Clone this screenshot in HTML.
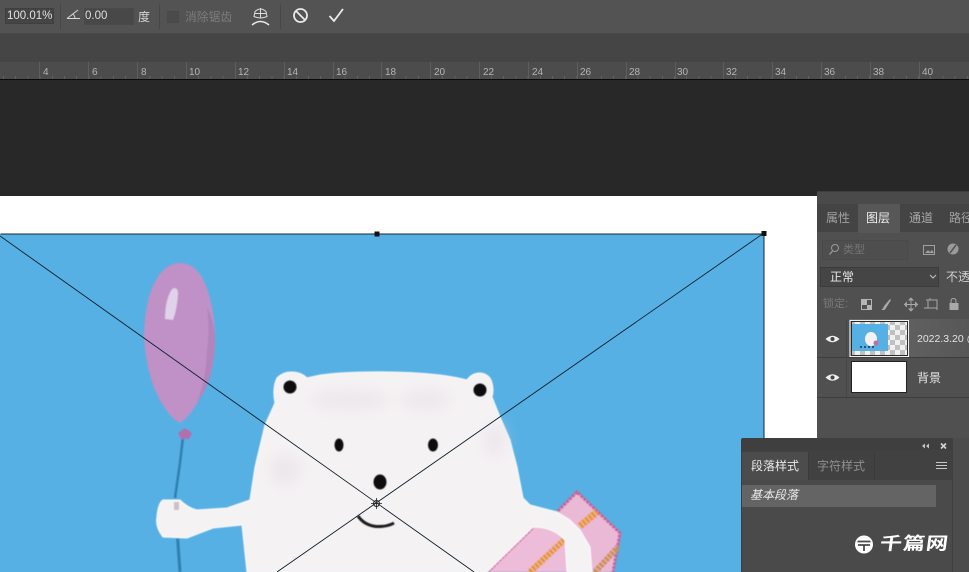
<!DOCTYPE html>
<html><head><meta charset="utf-8"><style>
html,body{margin:0;padding:0;background:#4c4c4c}
body{width:969px;height:572px;overflow:hidden;position:relative;font-family:"Liberation Sans","Noto Sans CJK SC",sans-serif}
#w{position:absolute;left:0;top:0;width:969px;height:572px;background:#282828;filter:blur(.3px);overflow:hidden}
#w div{position:absolute;white-space:nowrap}
svg{position:absolute;left:0;top:0}
#w .r{font-size:10px;top:67px;color:#b4b4b4;line-height:12px}
#w .m{width:1px;height:17px;top:62px;background:#5e5e5e}
#w .tab{font-size:12px;line-height:16px}
</style></head><body><div id="w">
<div style="left:0;top:0;width:969px;height:33px;background:#535353"></div>
<div style="left:0;top:33px;width:969px;height:29px;background:#454545;border-top:1px solid #4a4a4a;box-sizing:border-box"></div>
<div style="left:0;top:62px;width:969px;height:17px;background:#4c4c4c"></div>
<div style="left:0;top:76px;width:969px;height:3px;background:repeating-linear-gradient(90deg,#7a7a7a 0 1px,transparent 1px 12.2px);background-position:3px 0;opacity:.45"></div>
<div style="left:0;top:79px;width:969px;height:1px;background:#0a0a0a"></div>

<div style="left:5px;top:8px;width:49px;height:16px;background:#454545;border:1px solid #3f3f3f;box-sizing:border-box"></div>
<div style="left:7px;top:9px;font-size:11.5px;line-height:15px;color:#e2e2e2">100.01%</div>
<div style="left:60px;top:4px;width:1px;height:25px;background:#474747"></div>
<div style="left:84px;top:8px;width:50px;height:17px;background:#484848;border:1px solid #4a4a4a;box-sizing:border-box"></div>
<div style="left:85px;top:9px;font-size:11.5px;line-height:15px;color:#dedede">0.00</div>
<div style="left:138px;top:9px;font-size:12px;line-height:16px;color:#d6d6d6">度</div>
<div style="left:159px;top:4px;width:1px;height:25px;background:#474747"></div>
<div style="left:167px;top:11px;width:12px;height:12px;background:#4b4b4b;border:1px solid #494949;box-sizing:border-box"></div>
<div style="left:185px;top:9px;font-size:11.8px;line-height:16px;color:#7c7c7c">消除锯齿</div>
<div style="left:280px;top:4px;width:1px;height:25px;background:#474747"></div>

<svg width="969" height="572" viewBox="0 0 969 572" fill="none">
<path d="M67 18.500H80M67 18.500L78 10M75 18.500q0-3-2.500-4.500" stroke="#d8d8d8" stroke-width="1"/>
<path d="M255 11.500q5.500-5 11 0l1 5q-6.500 3-13 0zM254.500 13.500h12M260.500 8v10" stroke="#dcdcdc" stroke-width="1"/>
<path d="M252 25q8.500-7 17 0" stroke="#e6e6e6" stroke-width="1.500"/>
<circle cx="300.500" cy="15.500" r="6.500" stroke="#e8e8e8" stroke-width="1.800"/>
<path d="M296 11l9 9" stroke="#e8e8e8" stroke-width="1.800"/>
<path d="M329.500 16l4.500 5 9-12" stroke="#ececec" stroke-width="1.800"/>
</svg>

<div class="m" style="left:39px"></div><div class="r" style="left:43px">4</div>
<div class="m" style="left:88px"></div><div class="r" style="left:92px">6</div>
<div class="m" style="left:137px"></div><div class="r" style="left:141px">8</div>
<div class="m" style="left:186px"></div><div class="r" style="left:189px">10</div>
<div class="m" style="left:235px"></div><div class="r" style="left:238px">12</div>
<div class="m" style="left:284px"></div><div class="r" style="left:287px">14</div>
<div class="m" style="left:333px"></div><div class="r" style="left:336px">16</div>
<div class="m" style="left:381px"></div><div class="r" style="left:385px">18</div>
<div class="m" style="left:430px"></div><div class="r" style="left:434px">20</div>
<div class="m" style="left:479px"></div><div class="r" style="left:483px">22</div>
<div class="m" style="left:528px"></div><div class="r" style="left:532px">24</div>
<div class="m" style="left:577px"></div><div class="r" style="left:580px">26</div>
<div class="m" style="left:626px"></div><div class="r" style="left:629px">28</div>
<div class="m" style="left:675px"></div><div class="r" style="left:677px">30</div>
<div class="m" style="left:723px"></div><div class="r" style="left:726px">32</div>
<div class="m" style="left:772px"></div><div class="r" style="left:775px">34</div>
<div class="m" style="left:821px"></div><div class="r" style="left:824px">36</div>
<div class="m" style="left:870px"></div><div class="r" style="left:873px">38</div>
<div class="m" style="left:919px"></div><div class="r" style="left:922px">40</div>

<div style="left:0;top:196px;width:830px;height:376px;background:#fff"></div>
<svg width="969" height="572" viewBox="0 0 969 572" fill="none">
<defs>
<filter id="b" x="-5%" y="-5%" width="110%" height="110%"><feGaussianBlur stdDeviation=".6"/></filter>
<filter id="s" x="-30%" y="-30%" width="160%" height="160%"><feGaussianBlur stdDeviation="7"/></filter>
</defs>
<rect x="0" y="234" width="764" height="338" fill="#57b0e3"/>
<g filter="url(#b)">
<path d="M183 437L180 463L175 498" stroke="#2f7fb0" stroke-width="2.500"/>
<path d="M177 530L180 572" stroke="#2f7fb0" stroke-width="3"/>
<path d="M180 263Q200 263 209 295Q216 320 215 345Q212 380 196 405Q188 418 180 423Q170 418 160 400Q146 375 144 335Q145 300 155 282Q165 263 180 263Z" fill="#c091c6"/>
<path d="M207 307Q216 325 215 345Q213 370 208 383Q204 394 197 402Q206 380 207 350Q210 330 207 307Z" fill="#b384bc"/>
<path d="M172 289Q178 286 178 294Q177 310 173 320L165 319Q165 300 172 289Z" fill="#e0d2e8"/>
<path d="M178 433l7-5 7 5-3 6-8 0z" fill="#b170ad"/>
<path d="M558 511L577 492L620 533L613 572L585 572Z" fill="#eab9d5"/>
<path d="M558 511L577 492L620 533L613 572" stroke="#cf5e96" stroke-width="3" stroke-dasharray="3 1"/>
<path d="M580 526L597 512" stroke="#e9991f" stroke-width="7" stroke-dasharray="3 1"/>
<path d="M595 572L618 547" stroke="#cf9150" stroke-width="6" stroke-dasharray="3 1"/>
<path d="M487 572L533 527Q553 527 565 540L568 572Z" fill="#ecbcd8"/>
<path d="M487 572L533 527" stroke="#d4588f" stroke-width="3.500" stroke-dasharray="3 1"/>
<path d="M530 572L564 540" stroke="#e8981f" stroke-width="6" stroke-dasharray="3 1"/>
<path d="M277 378Q283 372 291 372Q301 372 307 378Q322 374 340 373Q395 370 440 375Q455 377 467 380Q472 373 480 373Q490 374 492 383Q494 390 492 397L500 417L510 440L517 467L523 498L530 505L557 512L570 520L580 530L590 547L592 572L567 572L565 540Q553 527 533 527L487 572L247 572L242 525L213 528L187 538L163 537Q155 527 157 517Q158 503 163 500L180 500Q188 508 197 510L227 508L250 500L255 467L265 425L275 403Q272 388 277 378Z" fill="#f5f2f4" stroke="#fbfbfc" stroke-width="1"/>
<rect x="174" y="502" width="5" height="8" fill="#cdbfc2"/>
</g>
<g filter="url(#s)" fill="#e5dfe4" opacity=".55">
<ellipse cx="285" cy="470" rx="16" ry="16"/>
<ellipse cx="350" cy="400" rx="40" ry="10"/>
<ellipse cx="425" cy="400" rx="25" ry="10"/>
<ellipse cx="495" cy="440" rx="10" ry="18"/>
</g>
<g filter="url(#b)">
<ellipse cx="290" cy="387" rx="6.500" ry="6.500" fill="#0c0c0c"/>
<ellipse cx="480" cy="390" rx="6.500" ry="6.500" fill="#0c0c0c"/>
<ellipse cx="339" cy="445" rx="4.500" ry="6.500" fill="#111"/>
<ellipse cx="433" cy="445" rx="5" ry="6.500" fill="#111"/>
<ellipse cx="380" cy="482" rx="6.500" ry="7.500" fill="#0c0c0c"/>
<path d="M358 516Q364 525 376 526.500Q387 527 394 523" stroke="#1f1f1f" stroke-width="3"/>
</g>
<path d="M0.500 234H764V572" stroke="#1a2630" stroke-width="1"/>
<path d="M0 236L474 572M764 233L277 572" stroke="#10202c" stroke-width=".9"/>
<circle cx="376.500" cy="503.500" r="3" stroke="#222" stroke-width="1"/>
<path d="M371 503.500h11M376.500 498v11" stroke="#222" stroke-width=".8"/>
<rect x="374.500" y="231.500" width="5" height="5" fill="#111"/>
<rect x="761.500" y="231" width="5" height="5" fill="#111"/>
</svg>

<div style="left:817px;top:191px;width:152px;height:260px;background:#505050;border-top:1px solid #3e3e3e;box-sizing:border-box"></div>
<div style="left:817px;top:192px;width:152px;height:12px;background:#4a4a4a"></div>
<div style="left:817px;top:204px;width:152px;height:28px;background:#444"></div>
<div style="left:858px;top:204px;width:42px;height:29px;background:#575757"></div>
<div class="tab" style="left:826px;top:210px;color:#a2a2a2">属性</div>
<div class="tab" style="left:866px;top:210px;color:#efefef">图层</div>
<div class="tab" style="left:909px;top:210px;color:#a8a8a8">通道</div>
<div class="tab" style="left:949px;top:210px;color:#a2a2a2">路径</div>
<div style="left:822px;top:240px;width:86px;height:20px;background:#4e4e4e;border:1px solid #4a4a4a;box-sizing:border-box"></div>
<div style="left:843px;top:243px;font-size:11px;line-height:14px;color:#757575">类型</div>
<div style="left:820px;top:267px;width:119px;height:20px;background:#454545;border:1px solid #3c3c3c;box-sizing:border-box"></div>
<div style="left:830px;top:270px;font-size:12px;line-height:15px;color:#e6e6e6">正常</div>
<div style="left:946px;top:270px;font-size:12px;line-height:15px;color:#d0d0d0">不透明度</div>
<div style="left:823px;top:297px;font-size:11px;line-height:14px;color:#7a7a7a">锁定:</div>
<svg width="969" height="572" viewBox="0 0 969 572" fill="none">
<circle cx="835" cy="248" r="3.500" stroke="#9a9a9a"/><path d="M832.500 251l-3 3.500" stroke="#9a9a9a" stroke-width="1.300"/>
<rect x="923.500" y="245.500" width="11" height="9" stroke="#a0a0a0"/><path d="M925 253l3-3 2 2 2-2 2 3z" fill="#a0a0a0"/>
<circle cx="953" cy="249" r="5.500" fill="#9a9a9a"/><path d="M950 253l6-8" stroke="#525252" stroke-width="1.500"/>
<path d="M930 275l3 3 3-3" stroke="#c4c4c4"/>
<rect x="861.500" y="299.500" width="10" height="10" stroke="#b5b5b5"/><path d="M862 300h5v5h-5zM867 305h5v5h-5z" fill="#b5b5b5"/>
<path d="M884 310q-3 0-3 0 2-1 3-4l6-7 1 1-5 8q-1 2-2 2z" fill="#a8a8a8"/>
<path d="M911 299v11M905.500 304.500h11M911 298l-2 2h4zM911 311l-2-2h4zM904.500 304.500l2-2v4zM917.500 304.500l-2-2v4z" stroke="#a8a8a8" stroke-width=".9"/>
<path d="M926 300h4v-2M928 300h9v10M924 308h13M928 300v8" stroke="#a8a8a8"/>
<path d="M951 303v-2q0-2.500 2.500-2.500t2.500 2.500v2" stroke="#a8a8a8"/><rect x="949.500" y="303" width="9" height="7" fill="#a8a8a8"/>
</svg>
<div style="left:817px;top:357px;width:152px;height:1px;background:#3d3d3d"></div>
<div style="left:817px;top:397px;width:152px;height:1px;background:#3d3d3d"></div>
<div style="left:849px;top:319px;width:120px;height:38px;background:linear-gradient(90deg,#686868,#575757)"></div>
<div style="left:846px;top:319px;width:1px;height:78px;background:#474747"></div>
<svg width="969" height="572" viewBox="0 0 969 572" fill="none">
<path d="M825.500 339q7-6.500 14 0q-7 6.500-14 0zM825.500 377.500q7-6.500 14 0q-7 6.500-14 0z" fill="#eee"/>
<circle cx="832.500" cy="339" r="2" fill="#444"/><circle cx="832.500" cy="377.500" r="2" fill="#444"/>
<defs><pattern id="c" width="10" height="10" patternUnits="userSpaceOnUse"><rect width="10" height="10" fill="#f0f0f0"/><rect width="5" height="5" fill="#c0c0c0"/><rect x="5" y="5" width="5" height="5" fill="#c0c0c0"/></pattern></defs>
<rect x="851" y="322" width="56" height="33" fill="url(#c)"/>
<rect x="852" y="324" width="36" height="27" fill="#57b0e3"/>
<ellipse cx="871" cy="339" rx="6" ry="7" fill="#f4f1f3"/><circle cx="876" cy="343" r="2.500" fill="#c86a9a"/>
<path d="M860 347h14" stroke="#234" stroke-width="1.500" stroke-dasharray="2 2"/>
<rect x="850" y="320.500" width="58.500" height="36" stroke="#f0f0f0" stroke-width="1"/>
<rect x="851.500" y="321.500" width="56" height="34" stroke="#2a2a2a" stroke-width="1"/>
<rect x="851.500" y="361.500" width="55" height="31" fill="#fff" stroke="#222" stroke-width="1"/>
</svg>
<div style="left:917px;top:332px;font-size:10.500px;line-height:14px;color:#e2e2e2">2022.3.20 @</div>
<div style="left:917px;top:370px;font-size:12px;line-height:16px;color:#e6e6e6">背景</div>

<div style="left:952px;top:438px;width:17px;height:134px;background:#4c4c4c"></div>
<div style="left:741px;top:438px;width:212px;height:134px;background:#4a4a4a;border:1px solid #3f3f3f;border-bottom:0;box-sizing:border-box;border-radius:2px 2px 0 0"></div>
<div style="left:742px;top:439px;width:210px;height:11px;background:#3f3f3f"></div>
<div style="left:742px;top:450px;width:210px;height:30px;background:#414141"></div>
<div style="left:742px;top:452px;width:66px;height:28px;background:#4c4c4c"></div>
<div style="left:808px;top:453px;width:1px;height:27px;background:#3a3a3a"></div>
<div style="left:874px;top:453px;width:1px;height:27px;background:#3a3a3a"></div>
<div class="tab" style="left:751px;top:458px;color:#e8e8e8">段落样式</div>
<div class="tab" style="left:817px;top:458px;color:#8f8f8f">字符样式</div>
<div style="left:742px;top:485px;width:194px;height:22px;background:#646464"></div>
<div style="left:750px;top:488px;font-size:12px;line-height:14px;color:#eaeaea;font-style:italic">基本段落</div>
<svg width="969" height="572" viewBox="0 0 969 572" fill="none">
<path d="M925 443.500l-3 2.500 3 2.500zM929 443.500l-3 2.500 3 2.500z" fill="#c4c4c4"/>
<path d="M941 443.500l5 5M946 443.500l-5 5" stroke="#d4d4d4" stroke-width="1.600"/>
<path d="M936 462.500h11M936 465.500h11M936 468.500h11" stroke="#c8c8c8"/>
<circle cx="864" cy="544.500" r="9" fill="#fff"/>
<path d="M857.500 541.500h13M858 545h12M864 545v6" stroke="#4a4a4a" stroke-width="1.800"/>
</svg>
<div style="left:880px;top:532px;font-size:22px;line-height:24px;font-weight:bold;color:#fff;letter-spacing:1px;transform:scaleY(.8) skewX(-6deg)">千篇网</div>
</div></body></html>
